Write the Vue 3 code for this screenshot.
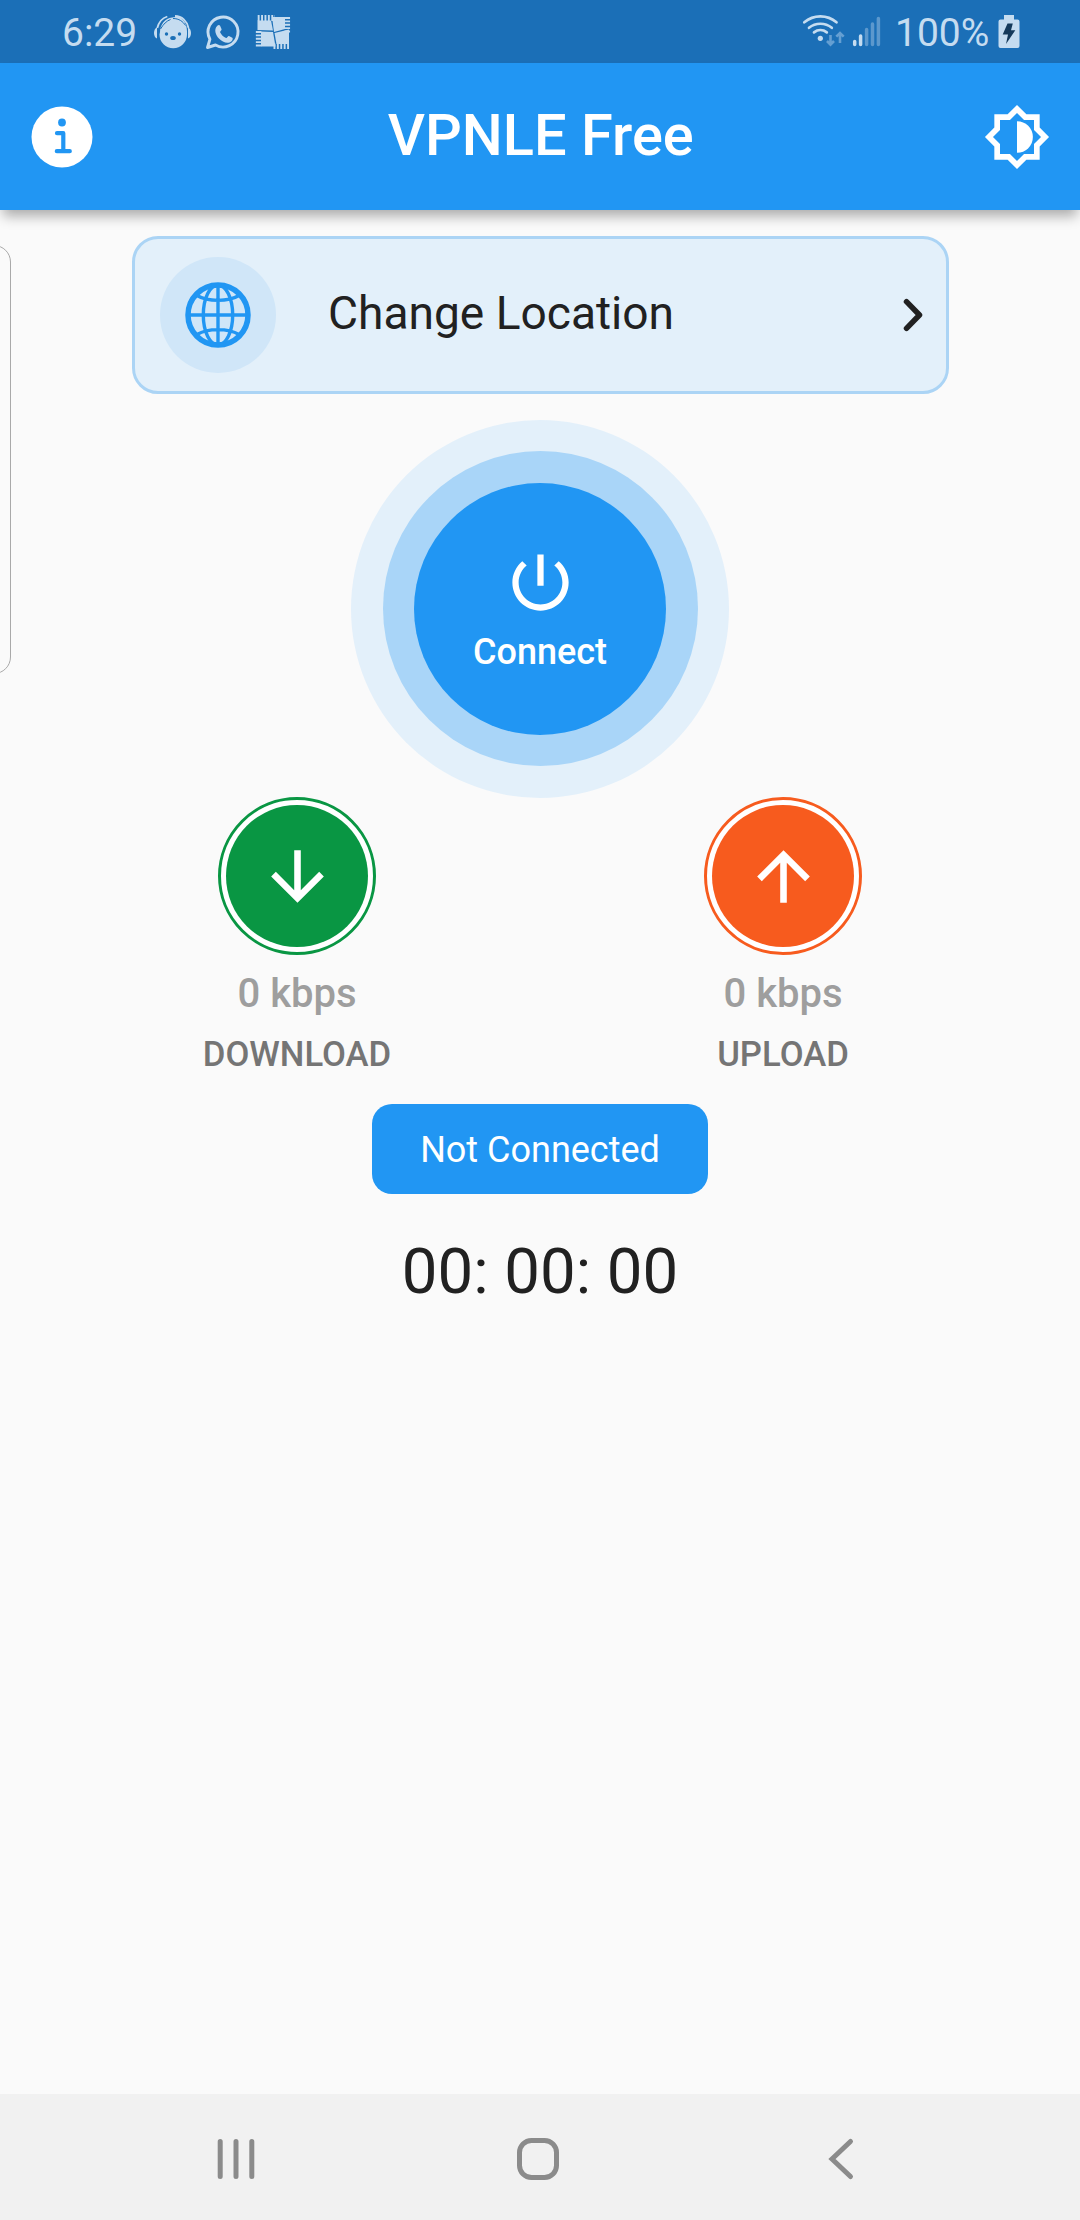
<template>
    <div class="screen">
        <div class="status-bar">
            <span class="clock">6:29</span>
            <svg class="notifications" width="184" height="63" viewBox="136 0 184 63">
                <!-- mascot with headphones -->
                <g fill="#c5dcf0">
                    <path d="M160 32c0-7 5-14 12-14.500l7-1c5 3 8 8 8 15v3a13.400 13.400 0 0 1-27.500 0z" />
                    <path d="M157 27.500c-4 1-4 10 0 11zM188 27.500c4 1 4 10 0 11z" />
                    <path d="M157.300 28c1.500-6 5-10 10-11.500M175 16c7 0 12 5 13.500 12" fill="none" stroke="#c5dcf0" stroke-width="1.800" />
                </g>
                <path d="M160.500 29c3-5 6-8 10-9.500M173 18.500c6 0 10 3 12.500 7" fill="none" stroke="#1b6fb7" stroke-width="1" />
                <g fill="#1b6fb7">
                    <circle cx="166.500" cy="34" r="1.700" />
                    <circle cx="179.500" cy="34" r="1.700" />
                    <ellipse cx="173" cy="38" rx="2.800" ry="2.100" />
                </g>
                <!-- chat bubble with handset -->
                <path d="M207.500 47.500l2.400-8.200a15 15 0 1 1 5.600 5.700z" fill="none" stroke="#c5dcf0" stroke-width="2.900" stroke-linejoin="round" />
                <path d="M217.300 25.700c1.200-1.200 2.400-.8 2.900.3l1.400 3.300c.3.900-1.700 2.300-1.500 3 1.200 2.600 3.300 4.500 6 5.700.9.300 2-2.300 2.900-1.900l3.300 1.600c1 .5.300 2.600-.8 3.600-4 3.500-9.300.4-12.300-2.600-3.200-3.200-5.900-9-1.900-13z" fill="#c5dcf0" />
                <!-- four tiles with a comb edge each -->
                <g fill="#c5dcf0">
                    <path d="M257.500 20.500H271l2 10-15.500-.5z" />
                    <path d="M272 17h13v12l-11 3z" />
                    <path d="M261 31.500l12 .5 2.500 14.500H261z" />
                    <path d="M274.500 33l14.500-3.500V44h-12.500z" />
                </g>
                <g fill="none" stroke="#c5dcf0" stroke-dasharray="1.900 1.500">
                    <path d="M257.700 18H275" stroke-width="6" />
                    <path d="M287.300 17v16.500" stroke-width="5.500" />
                    <path d="M258.600 46.500v-15.500" stroke-width="5.500" />
                    <path d="M289 46.200h-16.500" stroke-width="5.500" />
                </g>
            </svg>
            <svg class="signals" width="84" height="63" viewBox="800 0 84 63">
                <g fill="none" stroke="#c5dcf0" stroke-width="2.700" stroke-linecap="round">
                    <path d="M804.300 22.300a25 25 0 0 1 32.200 0" />
                    <path d="M809 27.800a18 18 0 0 1 22.800 0" />
                    <path d="M814 32.400a10.500 10.500 0 0 1 12.800 0" />
                </g>
                <circle cx="820.300" cy="38.300" r="2.600" fill="#c5dcf0" />
                <path d="M830.500 35v9M827 41l3.500 3.700L834 41M840 43V33.500M836.300 36.700l3.700-3.700 3.700 3.700" fill="none" stroke="#659fd2" stroke-width="2.600" />
                <g stroke-width="3.500" stroke-linecap="round">
                    <path d="M854.700 41.500v3M860.600 36v8.500" stroke="#c5dcf0" />
                    <path d="M866.600 29.500v15M872.500 24v20.500M878.400 18.500v26" stroke="#5c98cd" />
                </g>
            </svg>
            <span class="percent">100%</span>
            <svg class="battery" width="22" height="34" viewBox="0 0 22 34">
                <path d="M6 0h10v4.500h3.500a2 2 0 0 1 2 2V31a2 2 0 0 1-2 2h-17a2 2 0 0 1-2-2V6.500a2 2 0 0 1 2-2H6z" fill="#c5dcf0" />
                <path d="M9.500 8.500h5.300L13 15.300h4.300L8 29l2-9.500H4.700z" fill="#153a5b" />
            </svg>
        </div>

        <header class="app-bar">
            <svg width="62" height="62" viewBox="0 0 62 62">
                <circle cx="31" cy="31" r="30.500" fill="#fff" />
                <circle cx="31" cy="16.500" r="3.900" fill="#2196f3" />
                <path d="M26 27.200h6.300v18M25.800 45.200h13" fill="none" stroke="#2196f3" stroke-width="4.200" stroke-linecap="round" stroke-linejoin="round" />
            </svg>
            <h1>VPNLE Free</h1>
            <svg width="68" height="68" viewBox="0 0 24 24" fill="#fff">
                <path fill-rule="evenodd" d="M20 8.690V4h-4.690L12 .69 8.690 4H4v4.690L.69 12 4 15.310V20h4.690L12 23.310 15.310 20H20v-4.690L23.310 12 20 8.690zm-2 5.790V18h-3.520L12 20.480 9.520 18H6v-3.520L3.520 12 6 9.520V6h3.520L12 3.520 14.480 6H18v3.520L20.480 12 18 14.480z" />
                <path d="M12 6.400a5.600 5.600 0 0 1 0 11.200z" />
            </svg>
        </header>

        <main class="content">
            <div class="side-panel"></div>

            <button class="location">
                <span class="globe">
                    <svg width="66" height="66" viewBox="0 0 66 66" fill="none" stroke="#2196f3">
                        <circle cx="33" cy="33" r="30" stroke-width="5.500" />
                        <g stroke-width="3.400">
                            <ellipse cx="33" cy="33" rx="14.700" ry="30" />
                            <path d="M33 3v60M3 33h60M12 13.500c11 6.500 31 6.500 42 0M12 52.500c11-6.500 31-6.500 42 0" />
                        </g>
                    </svg>
                </span>
                <span class="location-label">Change Location</span>
                <svg width="20" height="34" viewBox="0 0 20 34">
                    <path d="M3.500 3.700L16.500 17 3.500 30.300" fill="none" stroke="#212121" stroke-width="5.500" stroke-linecap="round" stroke-linejoin="round" />
                </svg>
            </button>

            <div class="halo">
                <div class="halo-inner">
                    <button class="connect">
                        <svg width="75" height="75" viewBox="0 0 24 24" fill="#fff">
                            <path d="M13 3h-2v10h2V3zm4.830 2.170l-1.420 1.420C17.990 7.860 19 9.810 19 12c0 3.870-3.130 7-7 7s-7-3.130-7-7c0-2.190 1.010-4.140 2.580-5.420L6.170 5.170C4.230 6.820 3 9.260 3 12c0 4.970 4.030 9 9 9s9-4.030 9-9c0-2.740-1.230-5.180-3.170-6.830z" />
                        </svg>
                        <span>Connect</span>
                    </button>
                </div>
            </div>

            <div class="stats">
                <div v-for="stat in stats" :key="stat.label" class="stat">
                    <div class="ring" :class="stat.type">
                        <div class="disc">
                            <svg width="79" height="79" viewBox="0 0 24 24" fill="#fff">
                                <path :d="stat.icon" />
                            </svg>
                        </div>
                    </div>
                    <span class="speed">{{ stat.speed }} kbps</span>
                    <span class="stat-label">{{ stat.label }}</span>
                </div>
            </div>

            <div class="state">{{ connected ? 'Connected' : 'Not Connected' }}</div>
            <div class="timer">{{ timer }}</div>
        </main>

        <nav class="nav-bar">
            <svg width="44" height="44" viewBox="0 0 44 44" fill="none" stroke="#8b8b8b" stroke-width="5" stroke-linecap="round">
                <path d="M6.200 4.500v35M22 4.500v35M37.800 4.500v35" />
            </svg>
            <svg width="44" height="44" viewBox="0 0 44 44" fill="none" stroke="#8b8b8b" stroke-width="5">
                <rect x="3.500" y="3.500" width="37" height="37" rx="12" />
            </svg>
            <svg width="44" height="44" viewBox="0 0 44 44" fill="none" stroke="#8b8b8b" stroke-width="5" stroke-linecap="round">
                <path d="M32.500 4.500L14 22l18.500 17.500" />
            </svg>
        </nav>
    </div>
</template>

<script setup>
import { ref, computed } from 'vue';

const connected = ref(false);
const seconds = ref(0);

const stats = ref([
    {
        type: 'download',
        label: 'DOWNLOAD',
        speed: 0,
        icon: 'M20 12l-1.410-1.410L13 16.170V4h-2v12.170l-5.580-5.590L4 12l8 8 8-8z'
    },
    {
        type: 'upload',
        label: 'UPLOAD',
        speed: 0,
        icon: 'M4 12l1.410 1.410L11 7.830V20h2V7.830l5.580 5.590L20 12l-8-8-8 8z'
    }
]);

const pad = (n) => String(n).padStart(2, '0');

const timer = computed(() => {
    const s = seconds.value;
    return `${pad(Math.floor(s / 3600))}: ${pad(Math.floor(s / 60) % 60)}: ${pad(s % 60)}`;
});
</script>

<style>
body {
    background: #fafafa;
}
</style>

<style scoped>
.screen {
    width: 1080px;
    height: 2220px;
    display: flex;
    flex-direction: column;
    overflow: hidden;
    background: #fafafa;
    font-family: Roboto, "Noto Sans", sans-serif;
}
.screen svg {
    display: block;
    flex: none;
}
button {
    border: none;
    padding: 0;
    font-family: inherit;
}
.status-bar {
    height: 63px;
    flex: none;
    display: flex;
    align-items: center;
    background: #1b6fb7;
    color: #c5dcf0;
    font-size: 39px;
    line-height: 63px;
}
.clock {
    width: 74px;
    padding: 4px 0 0 62px;
    white-space: nowrap;
}
.signals {
    margin-left: 480px;
}
.percent {
    width: 103px;
    margin-left: 11px;
    padding-top: 4px;
}
.app-bar {
    position: relative;
    z-index: 1;
    height: 147px;
    flex: none;
    box-sizing: border-box;
    padding: 0 29px 0 30.5px;
    display: flex;
    align-items: center;
    justify-content: space-between;
    background: #2196f3;
    box-shadow: 0 9px 12px -3px rgba(0, 0, 0, 0.32);
}
.app-bar h1 {
    margin: 0 0 4px 6px;
    color: #fff;
    font-size: 57.75px;
    font-weight: 500;
    line-height: 70px;
}
.content {
    position: relative;
    flex: 1;
    display: flex;
    flex-direction: column;
    align-items: center;
    padding-top: 26px;
}
/* drawer card peeking in from the left edge */
.side-panel {
    position: absolute;
    left: -100px;
    top: 35px;
    width: 109px;
    height: 427px;
    border: 1px solid #a9a9a9;
    border-radius: 17px;
}
.location {
    width: 817px;
    height: 157.5px;
    box-sizing: border-box;
    padding: 0 23px 0 25.5px;
    display: flex;
    align-items: center;
    background: #e3f0fa;
    border: 3px solid #abd4f5;
    border-radius: 26px;
}
.globe {
    width: 115.5px;
    height: 115.5px;
    display: flex;
    align-items: center;
    justify-content: center;
    border-radius: 50%;
    background: #d0e6f8;
}
.location-label {
    flex: 1;
    margin-left: 52.5px;
    padding-bottom: 4px;
    text-align: left;
    color: #212121;
    font-size: 46.1px;
}
.halo {
    width: 378px;
    height: 378px;
    margin-top: 26px;
    display: flex;
    align-items: center;
    justify-content: center;
    border-radius: 50%;
    background: #e3f0fa;
}
.halo-inner {
    width: 315px;
    height: 315px;
    display: flex;
    align-items: center;
    justify-content: center;
    border-radius: 50%;
    background: #a9d5f8;
}
.connect {
    width: 252px;
    height: 252px;
    display: flex;
    flex-direction: column;
    align-items: center;
    justify-content: center;
    gap: 11px;
    border-radius: 50%;
    background: #2196f3;
    color: #fff;
    font-size: 36px;
    font-weight: 500;
    line-height: 42px;
}
.stats {
    display: flex;
    gap: 243px;
    margin-top: -0.5px;
}
.stat {
    width: 243px;
    display: flex;
    flex-direction: column;
    align-items: center;
}
.ring {
    width: 158px;
    height: 158px;
    box-sizing: border-box;
    display: flex;
    align-items: center;
    justify-content: center;
    border: 3px solid currentColor;
    border-radius: 50%;
    background: #fff;
}
.download {
    color: #099643;
}
.upload {
    color: #f75b1e;
}
.disc {
    width: 142px;
    height: 142px;
    display: flex;
    align-items: center;
    justify-content: center;
    border-radius: 50%;
    background: currentColor;
}
.speed {
    margin-top: 16px;
    color: #9e9e9e;
    font-size: 40px;
    font-weight: 500;
    line-height: 46px;
}
.stat-label {
    margin-top: 16px;
    color: #757575;
    font-size: 34.7px;
    font-weight: 500;
    line-height: 42px;
}
.state {
    width: 336px;
    height: 89.5px;
    margin-top: 29px;
    border-radius: 20px;
    background: #2196f3;
    color: #fff;
    font-size: 36px;
    line-height: 92px;
    text-align: center;
}
.timer {
    margin-top: 41px;
    color: #212121;
    font-size: 63.5px;
    line-height: 74px;
}
.nav-bar {
    height: 126px;
    flex: none;
    box-sizing: border-box;
    display: flex;
    align-items: center;
    justify-content: center;
    gap: 258px;
    padding: 3px 4px 0 0;
    background: #f1f1f1;
}
</style>
